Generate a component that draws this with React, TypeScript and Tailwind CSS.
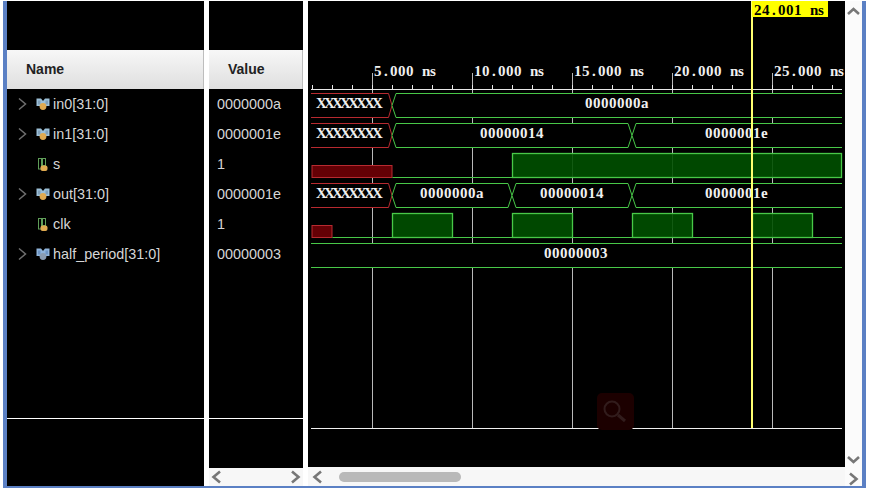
import React from "react";

const rows = [
  { name: "in0[31:0]", value: "0000000a", kind: "bus" },
  { name: "in1[31:0]", value: "0000001e", kind: "bus" },
  { name: "s", value: "1", kind: "wire" },
  { name: "out[31:0]", value: "0000001e", kind: "bus" },
  { name: "clk", value: "1", kind: "wire" },
  { name: "half_period[31:0]", value: "00000003", kind: "param" },
];

const GREEN = "#48c848";
const RED = "#b82a30";
const majors = [372.5, 472.5, 572.5, 672.5, 772.5];
const minors = Array.from({ length: 27 }, (_, i) => 312.5 + i * 20);

const Chevron = ({ dir, thin }: { dir: "left" | "right" | "up" | "down"; thin?: boolean }) => {
  const d = {
    left: "M10 1.5 L3.5 7 L10 12.5",
    right: "M3 1.5 L9.5 7 L3 12.5",
    up: "M1 10 L6.5 5 L12 10",
    down: "M1 4 L6.5 9 L12 4",
  }[dir];
  return (
    <svg width="13" height="14" viewBox="0 0 13 14">
      <path d={d} fill="none" stroke={thin ? "#6e6e6e" : "#777"} strokeWidth={thin ? 1.5 : 2.6} />
    </svg>
  );
};

const SignalIcon = ({ kind }: { kind: string }) => {
  if (kind === "wire") {
    return (
      <svg width="13" height="13" viewBox="0 0 13 13">
        <rect x="2.5" y="0.5" width="3" height="10.5" fill="none" stroke="#5f9e58" />
        <rect x="6.5" y="0.5" width="3" height="7" fill="none" stroke="#5f9e58" />
        <rect x="4.5" y="7.5" width="7" height="5.5" rx="2" fill="#e0aa50" />
      </svg>
    );
  }
  const param = kind === "param";
  return (
    <svg width="14" height="13" viewBox="0 0 14 13" className="overflow-visible">
      <path d="M0.5 0.5 H5 L7 3 L9 0.5 H13.5 V8 H9.5 V10 H4.5 V8 H0.5 Z" fill={param ? "#8fb4dc" : "#9cc0d8"} />
      <path d="M2 2.5 H4.5 V6.5 H2 Z M9.5 2.5 H12 V6.5 H9.5 Z" fill={param ? "#6d94c4" : "#7f9fb8"} />
      <circle cx="7" cy="8.5" r="3.4" fill={param ? "#8a9cb2" : "#e0aa50"} />
    </svg>
  );
};

const Bus = ({ row, cuts }: { row: number; cuts: number[] }) => {
  const top = 93.5 + row * 30;
  const bot = top + 24;
  const mid = top + 12;
  const pts = [392, ...cuts];
  return (
    <g>
      <path d={`M311,${top} H388.5 L392,${mid} L388.5,${bot} H311`} fill="#000" stroke={RED} />
      {pts.map((x, i) => {
        const next = pts[i + 1];
        const d = next
          ? `M${x + 4},${top} H${next - 4} L${next},${mid} L${next - 4},${bot} H${x + 4} L${x},${mid} Z`
          : `M842,${top} H${x + 4} L${x},${mid} L${x + 4},${bot} H842`;
        return <path key={x} d={d} fill="#000" stroke={GREEN} />;
      })}
    </g>
  );
};

// the simulator draws a fixed 8px cell per character, whatever the glyph
const CellText = ({ x, y, fill, children }: { x: number; y: number; fill: string; children: string }) => {
  const xs = children.split("").map((c, i) => x + i * 8 + (c === "." ? 2 : c === "X" ? -1 : 0));
  return (
    <text
      x={xs.join(" ")}
      y={y}
      fill={fill}
      fontSize="15"
      fontWeight="700"
      className="font-['Liberation_Serif',serif]"
    >
      {children}
    </text>
  );
};

const WaveText = ({ x, row, children }: { x: number; row: number; children: string }) => (
  <CellText x={x - 32} y={108 + row * 30} fill="#f0f0f0">
    {children}
  </CellText>
);

const Pulse = ({ row, x0, x1 }: { row: number; x0: number; x1: number }) => (
  <rect
    x={x0}
    y={93.5 + row * 30}
    width={x1 - x0}
    height={24}
    fill="#005000"
    fillOpacity="0.9"
    stroke={GREEN}
    strokeWidth="1.3"
  />
);

const Waves = () => (
  <svg width="537" height="466" viewBox="308 1 537 466" className="block">
    {majors.map((x) => (
      <path key={x} d={`M${x},73 V428`} stroke="#b9b9b9" />
    ))}
    <path d="M311,89.5 H842" stroke="#e8e8e8" />
    {minors.map((x) => (
      <path key={x} d={`M${x},85 V89`} stroke="#e8e8e8" />
    ))}
    <CellText x={374} y={76} fill="#f0f0f0">5.000 ns</CellText>
    <CellText x={474} y={76} fill="#f0f0f0">10.000 ns</CellText>
    <CellText x={574} y={76} fill="#f0f0f0">15.000 ns</CellText>
    <CellText x={674} y={76} fill="#f0f0f0">20.000 ns</CellText>
    <CellText x={774} y={76} fill="#f0f0f0">25.000 ns</CellText>

    <Bus row={0} cuts={[]} />
    <Bus row={1} cuts={[632]} />
    <Bus row={3} cuts={[512, 632]} />
    <rect x="311" y="243.5" width="531" height="24" fill="#000" />
    <path d="M311,243.5 H842 M311,267.5 H842" stroke={GREEN} />

    <rect x="312" y="165.5" width="80" height="12" fill="#640005" stroke={RED} />
    <path d="M392.5,177.5 H512.5" stroke={GREEN} />
    <Pulse row={2} x0={512.5} x1={841.5} />

    <rect x="312" y="225.5" width="20" height="12" fill="#640005" stroke={RED} />
    <path d="M332.5,237.5 H842" stroke={GREEN} />
    {[392.5, 512.5, 632.5, 752.5].map((x) => (
      <Pulse key={x} row={4} x0={x} x1={x + 60} />
    ))}

    <WaveText x={349} row={0}>XXXXXXXX</WaveText>
    <WaveText x={617} row={0}>0000000a</WaveText>
    <WaveText x={349} row={1}>XXXXXXXX</WaveText>
    <WaveText x={512} row={1}>00000014</WaveText>
    <WaveText x={737} row={1}>0000001e</WaveText>
    <WaveText x={349} row={3}>XXXXXXXX</WaveText>
    <WaveText x={452} row={3}>0000000a</WaveText>
    <WaveText x={572} row={3}>00000014</WaveText>
    <WaveText x={737} row={3}>0000001e</WaveText>
    <WaveText x={576} row={5}>00000003</WaveText>

    <path d="M311,428.5 H842" stroke="#f0f0f0" />

    <rect x="597" y="393" width="37" height="37" rx="5" fill="#1c0000" />
    <circle cx="612" cy="409" r="7.5" fill="none" stroke="#321c1c" strokeWidth="2" />
    <path d="M618,415 L625,421" stroke="#321c1c" strokeWidth="3" />

    <path d="M752,1 V428" stroke="#ffff70" strokeWidth="2" />
    <rect x="752" y="1" width="76" height="16" fill="#ffff00" />
    <CellText x={754} y={15} fill="#000">24.001 ns</CellText>
  </svg>
);

const HeaderCell = ({ label }: { label: string }) => (
  <div className="h-[39px] pl-[19px] flex items-center bg-linear-to-b from-[#f7f7f7] to-[#dfdfdf] border-r border-[#bdbdbd] text-[14px] font-bold text-[#222]">
    {label}
  </div>
);

export default function App() {
  return (
    <div className="w-[876px] h-[488px] bg-white pl-[3px] pt-px font-['Liberation_Sans',Arial,sans-serif]">
      <div className="w-[863px] h-[487px] border-l-4 border-r-4 border-b-2 border-[#5b80c4] flex bg-white">
        {/* names */}
        <div className="w-[197px] bg-black flex flex-col">
          <div className="h-[49px]" />
          <HeaderCell label="Name" />
          {rows.map((r) => (
            <div key={r.name} className="h-[30px] flex items-center text-[14.4px] text-[#d6d6d6]">
              <div className="w-[29px] pl-[9px] flex">
                {r.kind !== "wire" && <Chevron dir="right" thin />}
              </div>
              <div className="w-[13px] flex">
                <SignalIcon kind={r.kind} />
              </div>
              <span className="ml-[4px] pt-px">{r.name}</span>
            </div>
          ))}
          <div className="h-[149px]" />
          <div className="h-px bg-white" />
        </div>

        {/* values */}
        <div className="w-[94px] ml-[5px] flex flex-col">
          <div className="flex-1 bg-black flex flex-col">
            <div className="h-[49px]" />
            <HeaderCell label="Value" />
            {rows.map((r) => (
              <div key={r.name} className="h-[30px] flex items-center pl-[8px] pt-px text-[14.4px] text-[#d6d6d6]">
                {r.value}
              </div>
            ))}
            <div className="h-[149px]" />
            <div className="h-px bg-white" />
          </div>
          <div className="h-[18px] bg-[#f7f7f7] flex items-center justify-between px-px">
            <Chevron dir="left" />
            <Chevron dir="right" />
          </div>
        </div>

        {/* waveform */}
        <div className="w-[537px] ml-[5px] flex flex-col">
          <div className="h-[466px] bg-black">
            <Waves />
          </div>
          <div className="flex-1 bg-[#f7f7f7] flex items-center pl-[3px]">
            <Chevron dir="left" />
            <div className="ml-[15px] w-[122px] h-[10px] rounded-full bg-[#b9b9b9]" />
          </div>
        </div>

        {/* right scrollbar */}
        <div className="w-[17px] flex flex-col items-center justify-between bg-[#fbfbfb] pt-[3px]">
          <Chevron dir="up" />
          <div className="flex flex-col items-center gap-[5px]">
            <Chevron dir="down" />
            <Chevron dir="right" />
          </div>
        </div>
      </div>
    </div>
  );
}
